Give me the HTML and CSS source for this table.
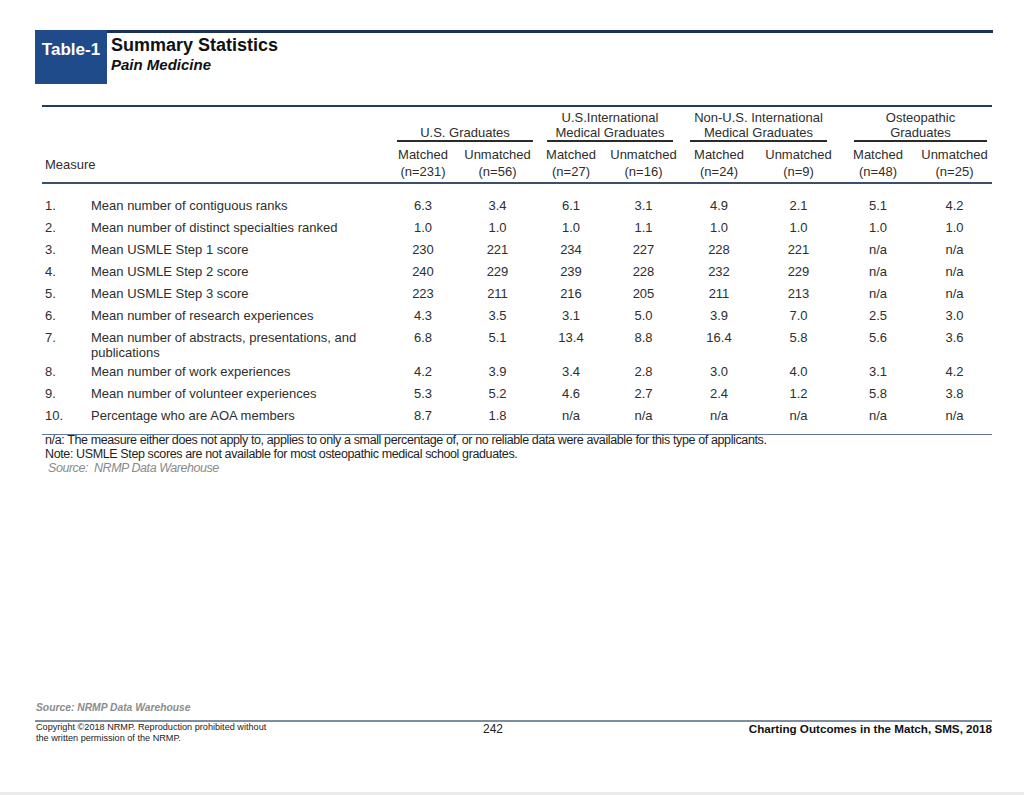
FILE: index.html
```html
<!DOCTYPE html>
<html>
<head>
<meta charset="utf-8">
<title>Table-1 Summary Statistics</title>
<link rel="stylesheet" href="styles.css">
</head>
<body>
<div class="page">
  <header class="hdr">
    <div class="tag">Table-1</div>
    <div class="titles">
      <div class="title">Summary Statistics</div>
      <div class="subtitle">Pain Medicine</div>
    </div>
  </header>

  <section class="tbl">
    <div class="hspacer"></div>
    <div class="grp g1">U.S. Graduates</div>
    <div class="grp g2">U.S.International<br>Medical Graduates</div>
    <div class="grp g3">Non-U.S. International<br>Medical Graduates</div>
    <div class="grp g4">Osteopathic<br>Graduates</div>

    <div class="measure-h">Measure</div>
    <div class="sub">Matched<br>(n=231)</div>
    <div class="sub">Unmatched<br>(n=56)</div>
    <div class="sub">Matched<br>(n=27)</div>
    <div class="sub">Unmatched<br>(n=16)</div>
    <div class="sub">Matched<br>(n=24)</div>
    <div class="sub">Unmatched<br>(n=9)</div>
    <div class="sub">Matched<br>(n=48)</div>
    <div class="sub">Unmatched<br>(n=25)</div>

    <div class="rule-mid"></div>

    <div class="row"><div class="n">1.</div><div class="lbl">Mean number of contiguous ranks</div><div class="v">6.3</div><div class="v">3.4</div><div class="v">6.1</div><div class="v">3.1</div><div class="v">4.9</div><div class="v">2.1</div><div class="v">5.1</div><div class="v">4.2</div></div>
    <div class="row"><div class="n">2.</div><div class="lbl">Mean number of distinct specialties ranked</div><div class="v">1.0</div><div class="v">1.0</div><div class="v">1.0</div><div class="v">1.1</div><div class="v">1.0</div><div class="v">1.0</div><div class="v">1.0</div><div class="v">1.0</div></div>
    <div class="row"><div class="n">3.</div><div class="lbl">Mean USMLE Step 1 score</div><div class="v">230</div><div class="v">221</div><div class="v">234</div><div class="v">227</div><div class="v">228</div><div class="v">221</div><div class="v">n/a</div><div class="v">n/a</div></div>
    <div class="row"><div class="n">4.</div><div class="lbl">Mean USMLE Step 2 score</div><div class="v">240</div><div class="v">229</div><div class="v">239</div><div class="v">228</div><div class="v">232</div><div class="v">229</div><div class="v">n/a</div><div class="v">n/a</div></div>
    <div class="row"><div class="n">5.</div><div class="lbl">Mean USMLE Step 3 score</div><div class="v">223</div><div class="v">211</div><div class="v">216</div><div class="v">205</div><div class="v">211</div><div class="v">213</div><div class="v">n/a</div><div class="v">n/a</div></div>
    <div class="row"><div class="n">6.</div><div class="lbl">Mean number of research experiences</div><div class="v">4.3</div><div class="v">3.5</div><div class="v">3.1</div><div class="v">5.0</div><div class="v">3.9</div><div class="v">7.0</div><div class="v">2.5</div><div class="v">3.0</div></div>
    <div class="row wrap"><div class="n">7.</div><div class="lbl">Mean number of abstracts, presentations, and publications</div><div class="v">6.8</div><div class="v">5.1</div><div class="v">13.4</div><div class="v">8.8</div><div class="v">16.4</div><div class="v">5.8</div><div class="v">5.6</div><div class="v">3.6</div></div>
    <div class="row"><div class="n">8.</div><div class="lbl">Mean number of work experiences</div><div class="v">4.2</div><div class="v">3.9</div><div class="v">3.4</div><div class="v">2.8</div><div class="v">3.0</div><div class="v">4.0</div><div class="v">3.1</div><div class="v">4.2</div></div>
    <div class="row"><div class="n">9.</div><div class="lbl">Mean number of volunteer experiences</div><div class="v">5.3</div><div class="v">5.2</div><div class="v">4.6</div><div class="v">2.7</div><div class="v">2.4</div><div class="v">1.2</div><div class="v">5.8</div><div class="v">3.8</div></div>
    <div class="row"><div class="n">10.</div><div class="lbl">Percentage who are AOA members</div><div class="v">8.7</div><div class="v">1.8</div><div class="v">n/a</div><div class="v">n/a</div><div class="v">n/a</div><div class="v">n/a</div><div class="v">n/a</div><div class="v">n/a</div></div>

    <div class="rule-end"></div>
  </section>

  <div class="notes">
    <p>n/a: The measure either does not apply to, applies to only a small percentage of, or no reliable data were available for this type of applicants.</p>
    <p>Note: USMLE Step scores are not available for most osteopathic medical school graduates.</p>
    <p class="src">Source:&nbsp; NRMP Data Warehouse</p>
  </div>

  <footer class="foot">
    <div class="fsrc">Source: NRMP Data Warehouse</div>
    <div class="fbar">
      <div class="copy">Copyright ©2018 NRMP. Reproduction prohibited without<br>the written permission of the NRMP.</div>
      <div class="pg">242</div>
      <div class="pub">Charting Outcomes in the Match, SMS, 2018</div>
    </div>
  </footer>
</div>
</body>
</html>
```

FILE: styles.css
```css
* { box-sizing: border-box; }
html, body { margin: 0; padding: 0; background: #ffffff; }
body { font-family: "Liberation Sans", Arial, sans-serif; color: #2b2b2b; }

.page {
  width: 1024px;
  height: 795px;
  display: flex;
  flex-direction: column;
  border-bottom: 3px solid #ebebeb;
}

/* header */
.hdr { display: flex; margin: 30px 0 0 35px; width: 958px; }
.tag {
  width: 72px; height: 54px;
  background: #1f4b8b; color: #ffffff;
  font-weight: bold; font-size: 17px; line-height: 20px;
  text-align: center; padding-top: 10px;
}
.titles { flex: 1; border-top: 3px solid #1b3358; padding: 2px 0 0 4px; }
.title { font-size: 18px; font-weight: bold; line-height: 20px; color: #111; }
.subtitle { font-size: 15px; font-weight: bold; font-style: italic; line-height: 18px; margin-top: 1px; color: #111; }

/* table */
.tbl {
  margin: 21px 0 0 42px;
  width: 950px;
  display: grid;
  grid-template-columns: 49px 295px 74px 75px 72px 73px 78px 81px 78px 75px;
  border-top: 2px solid #213d5c;
  font-size: 13px;
  color: #2e2e2e;
}
.hspacer { grid-row: 1; grid-column: 1 / 3; }
.grp {
  grid-row: 1;
  display: flex; align-items: flex-end; justify-content: center;
  text-align: center; line-height: 15px;
  padding-top: 3px;
  border-bottom: 2px solid #2a2a2a;
}
.g1 { grid-column: 3 / 5; margin: 0 2px 0 11px; }
.g2 { grid-column: 5 / 7; margin: 0 7px 0 12px; }
.g3 { grid-column: 7 / 9; margin: 0 12px 0 10px; }
.g4 { grid-column: 9 / 11; margin: 0 5px 0 15px; }

.measure-h { grid-row: 2; grid-column: 1 / 3; align-self: center; padding: 5px 0 0 3px; line-height: 15px; }
.sub { grid-row: 2; text-align: center; line-height: 17px; padding: 3.5px 0 2.5px; }

.rule-mid { grid-column: 1 / -1; height: 2px; background: #3a5068; margin-bottom: 10px; }

.row { display: contents; }
.row > div { padding: 3.55px 0; line-height: 15px; }
.row.wrap > div { padding-bottom: 0; }
.row > .n { padding-left: 3px; }
.row > .v { text-align: center; }

.rule-end { grid-column: 1 / -1; height: 1px; background: #5f7a98; margin-top: 8px; }

/* notes */
.notes {
  margin: -1px 0 0 45px;
  font-family: "Liberation Sans", Arial, sans-serif;
  font-size: 12.5px; line-height: 13.7px;
  letter-spacing: -0.38px;
  color: #1e1e1e;
}
.notes p { margin: 0; }
.notes .src { color: #8a8a8a; font-style: italic; padding-left: 3px; letter-spacing: -0.45px; }

/* footer */
.foot { margin: auto 0 48px 35px; width: 957px; }
.fsrc { font-size: 10.3px; font-weight: bold; font-style: italic; color: #8c8c8c; line-height: 12px; padding-left: 1px; }
.fbar {
  border-top: 2px solid #7d8ea0;
  margin-top: 6px;
  padding-top: 0.5px;
  display: grid;
  grid-template-columns: 448px auto 1fr;
}
.copy { font-size: 9.15px; line-height: 11px; color: #222; padding-left: 1px; }
.pg { font-size: 12px; line-height: 14px; color: #222; }
.pub { font-size: 11.65px; font-weight: bold; line-height: 14px; text-align: right; color: #111; }
```
